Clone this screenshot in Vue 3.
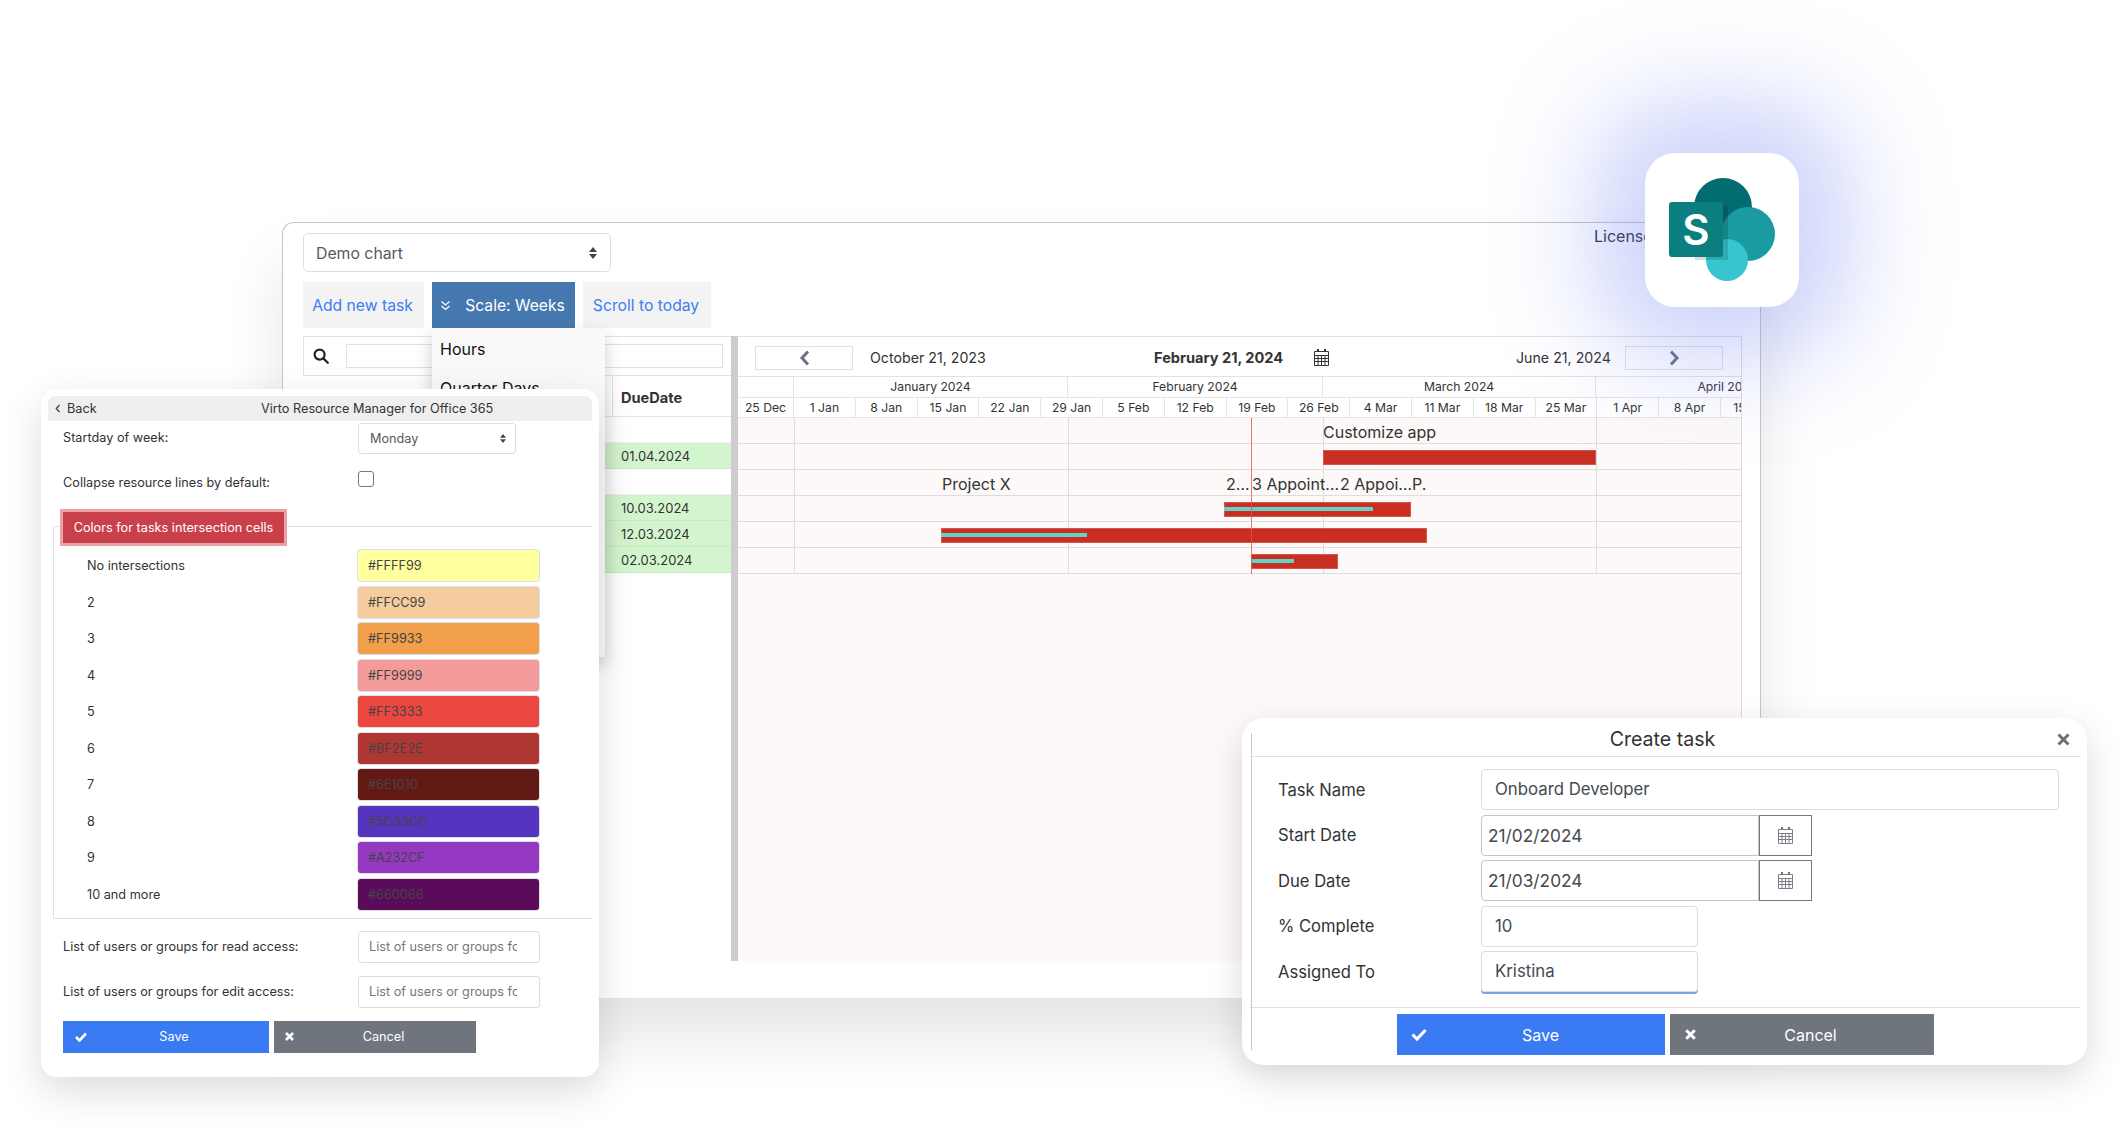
<script setup>
const months = [
  { label: '', w: 56 },
  { label: 'January 2024', w: 274 },
  { label: 'February 2024', w: 255 },
  { label: 'March 2024', w: 273 },
  { label: 'April 2024', w: 264 }
]
const weeks = ['1 Jan', '8 Jan', '15 Jan', '22 Jan', '29 Jan', '5 Feb', '12 Feb', '19 Feb', '26 Feb', '4 Mar', '11 Mar', '18 Mar', '25 Mar', '1 Apr', '8 Apr', '15 Apr']
const monthLines = [56, 330, 585, 858]
const rows = [
  { due: '', labels: [{ x: 585, t: 'Customize app' }] },
  { due: '01.04.2024', bar: { x: 585, w: 273 } },
  { due: '', labels: [{ x: 204, t: 'Project X' }, { x: 488, t: '2…' }, { x: 514, t: '3 Appoint…' }, { x: 602, t: '2 Appoi…' }, { x: 674, t: 'P.' }] },
  { due: '10.03.2024', bar: { x: 486, w: 187, p: 149 } },
  { due: '12.03.2024', bar: { x: 203, w: 486, p: 146 } },
  { due: '02.03.2024', bar: { x: 513, w: 87, p: 43 } }
]
const colors = [
  { label: 'No intersections', hex: '#FFFF99', bg: '#ffff9e' },
  { label: '2', hex: '#FFCC99', bg: '#f5cc9e' },
  { label: '3', hex: '#FF9933', bg: '#f19f4a' },
  { label: '4', hex: '#FF9999', bg: '#f39b9b' },
  { label: '5', hex: '#FF3333', bg: '#eb4640' },
  { label: '6', hex: '#BF2E2E', bg: '#ae3633' },
  { label: '7', hex: '#6E1010', bg: '#641a14' },
  { label: '8', hex: '#5C33CC', bg: '#5535c0' },
  { label: '9', hex: '#A232CF', bg: '#9538c2' },
  { label: '10 and more', hex: '#660066', bg: '#5a0c5a' }
]
const taskRows = [
  { label: 'Task Name', value: 'Onboard Developer', type: 'full' },
  { label: 'Start Date', value: '21/02/2024', type: 'date' },
  { label: 'Due Date', value: '21/03/2024', type: 'date' },
  { label: '% Complete', value: '10', type: 'short' },
  { label: 'Assigned To', value: 'Kristina', type: 'focus' }
]
</script>

<template>
  <div class="page">
    <!-- main gantt window -->
    <div class="window">
      <div class="license">License</div>
      <div class="select demo-select">
        <span>Demo chart</span>
        <svg class="updown" width="8" height="12" viewBox="0 0 8 12"><path d="M4 0l4 5H0zM4 12L0 7h8z" fill="#444" /></svg>
      </div>
      <div class="toolbar">
        <div class="tool-btn add-btn">Add new task</div>
        <div class="scale-wrap">
          <div class="tool-btn scale-btn">
            <svg width="11" height="11" viewBox="0 0 11 11" fill="none" stroke="#fff" stroke-width="1.3"><path d="M1.5 1.5l4 3.5 4-3.5M1.5 6l4 3.5 4-3.5" /></svg>
            <span>Scale: Weeks</span>
          </div>
          <div class="scale-menu">
            <div class="menu-item">Hours</div>
            <div class="menu-item">Quarter Days</div>
          </div>
        </div>
        <div class="tool-btn today-btn">Scroll to today</div>
      </div>

      <div class="chart">
        <div class="grid-side">
          <div class="search-row">
            <svg width="16" height="16" viewBox="0 0 16 16" fill="none" stroke="#222" stroke-width="2.2"><circle cx="6.6" cy="6.6" r="5" /><path d="M10.4 10.4l4.4 4.4" stroke-linecap="round" /></svg>
            <div class="search-input"></div>
          </div>
          <div class="grid-head">
            <div class="due-col due-title">DueDate</div>
          </div>
          <div v-for="(r, i) in rows" :key="i" class="grid-row" :class="{ green: r.due }">
            <div class="due-col">{{ r.due }}</div>
          </div>
        </div>
        <div class="splitter"></div>
        <div class="gantt">
          <div class="gantt-nav">
            <div class="nav-btn">
              <svg width="11" height="16" viewBox="0 0 11 16" fill="none" stroke="#6c7280" stroke-width="3"><path d="M9 1.5L3 8l6 6.5" /></svg>
            </div>
            <span class="nav-from">October 21, 2023</span>
            <span class="nav-now">February 21, 2024</span>
            <svg class="nav-cal" width="15" height="17" viewBox="0 0 15 17"><path d="M3 0h2v3H3zM10 0h2v3h-2z" fill="#333" /><path d="M.5 2.5h14v14H.5zM.5 6.5h14M.5 9.5h14M.5 12.5h14M4 6v10M7.5 6v10M11 6v10" fill="none" stroke="#333" stroke-width="1" /></svg>
            <span class="nav-to">June 21, 2024</span>
            <div class="nav-btn next">
              <svg width="11" height="16" viewBox="0 0 11 16" fill="none" stroke="#6c7280" stroke-width="3"><path d="M2 1.5L8 8l-6 6.5" /></svg>
            </div>
          </div>
          <div class="scale-row month-row">
            <div v-for="m in months" :key="m.w + m.label" class="month" :style="{ width: m.w + 'px' }">{{ m.label }}</div>
          </div>
          <div class="scale-row week-row">
            <div class="week first">25 Dec</div>
            <div v-for="w in weeks" :key="w" class="week">{{ w }}</div>
          </div>
          <div class="gantt-body">
            <div v-for="x in monthLines" :key="x" class="month-line" :style="{ left: x + 'px' }"></div>
            <div v-for="(r, i) in rows" :key="i" class="g-row">
              <span v-for="l in r.labels" :key="l.t" class="g-label" :style="{ left: l.x + 'px' }">{{ l.t }}</span>
              <div v-if="r.bar" class="bar" :style="{ left: r.bar.x + 'px', width: r.bar.w + 'px' }">
                <div v-if="r.bar.p" class="progress" :style="{ width: r.bar.p + 'px' }"></div>
              </div>
            </div>
            <div class="today-line"></div>
          </div>
        </div>
      </div>
    </div>

    <!-- sharepoint tile -->
    <div class="logo-tile">
      <svg width="154" height="154" viewBox="0 0 154 154">
        <circle cx="78" cy="54" r="29" fill="#036c70" />
        <circle cx="103" cy="81" r="27" fill="#1a9ba1" />
        <circle cx="82" cy="107" r="21" fill="#37c6d0" />
        <path d="M50 52h30a3 3 0 0 1 3 3v52H50z" fill="#000" opacity=".14" />
        <rect x="24" y="49" width="54" height="55" rx="3" fill="#0b7f7f" />
        <text x="51" y="92" text-anchor="middle" class="logo-s">S</text>
      </svg>
    </div>

    <!-- settings panel -->
    <div class="settings">
      <div class="settings-head">
        <span class="back">
          <svg width="6" height="9" viewBox="0 0 6 9" fill="none" stroke="#333" stroke-width="1.1"><path d="M4.5 1L1.2 4.5 4.5 8" /></svg>
          Back
        </span>
        <span class="settings-title">Virto Resource Manager for Office 365</span>
      </div>
      <div class="form-row week-start">
        <span class="row-label">Startday of week:</span>
        <div class="select week-select">
          <span>Monday</span>
          <svg width="6" height="9" viewBox="0 0 8 12"><path d="M4 0l4 5H0zM4 12L0 7h8z" fill="#444" /></svg>
        </div>
      </div>
      <div class="form-row collapse-row">
        <span class="row-label">Collapse resource lines by default:</span>
        <div class="checkbox"></div>
      </div>
      <div class="fieldset">
        <div class="legend">Colors for tasks intersection cells</div>
        <div class="color-list">
          <div v-for="c in colors" :key="c.hex" class="color-row">
            <span class="color-label">{{ c.label }}</span>
            <div class="swatch" :style="{ background: c.bg }">{{ c.hex }}</div>
          </div>
        </div>
      </div>
      <div class="form-row access-row read-row">
        <span class="row-label">List of users or groups for read access:</span>
        <div class="text-box"><span>List of users or groups fc</span></div>
      </div>
      <div class="form-row access-row">
        <span class="row-label">List of users or groups for edit access:</span>
        <div class="text-box"><span>List of users or groups fc</span></div>
      </div>
      <div class="settings-actions">
        <div class="btn save small-save">
          <svg width="12" height="10" viewBox="0 0 12 10" fill="none" stroke="#fff" stroke-width="2.6"><path d="M1 5l3.5 3.5L11 1.5" /></svg>
          <span>Save</span>
        </div>
        <div class="btn cancel small-cancel">
          <svg width="9" height="9" viewBox="0 0 9 9" fill="none" stroke="#fff" stroke-width="2.6"><path d="M1 1l7 7M8 1L1 8" /></svg>
          <span>Cancel</span>
        </div>
      </div>
    </div>

    <!-- create task dialog -->
    <div class="dialog">
      <div class="dialog-edge"></div>
      <div class="dialog-head">
        <span>Create task</span>
        <svg class="dialog-close" width="13" height="13" viewBox="0 0 13 13" fill="none" stroke="#6b7078" stroke-width="3"><path d="M1.5 1.5l10 10M11.5 1.5l-10 10" /></svg>
      </div>
      <div class="dialog-body">
        <div v-for="t in taskRows" :key="t.label" class="task-row">
          <span class="task-label">{{ t.label }}</span>
          <div v-if="t.type === 'date'" class="date-group">
            <div class="task-input date-input">{{ t.value }}</div>
            <div class="date-addon">
              <svg width="15" height="17" viewBox="0 0 15 17"><path d="M3 0h2v3H3zM10 0h2v3h-2z" fill="#6b7078" /><path d="M.5 2.5h14v14H.5zM.5 6.5h14M.5 9.5h14M.5 12.5h14M4 6v10M7.5 6v10M11 6v10" fill="none" stroke="#7b8088" stroke-width="1" /></svg>
            </div>
          </div>
          <div v-else class="task-input" :class="t.type">{{ t.value }}</div>
        </div>
      </div>
      <div class="dialog-foot">
        <div class="btn save big-save">
          <svg width="16" height="13" viewBox="0 0 12 10" fill="none" stroke="#fff" stroke-width="2.4"><path d="M1 5l3.5 3.5L11 1.5" /></svg>
          <span>Save</span>
        </div>
        <div class="btn cancel big-cancel">
          <svg width="11" height="11" viewBox="0 0 9 9" fill="none" stroke="#fff" stroke-width="2.4"><path d="M1 1l7 7M8 1L1 8" /></svg>
          <span>Cancel</span>
        </div>
      </div>
    </div>
  </div>
</template>

<style>
html, body { background: #fff; }
</style>

<style scoped>
.page {
  position: relative;
  width: 2127px;
  height: 1143px;
  overflow: hidden;
  background: #fff;
  font-family: Inter, "Liberation Sans", sans-serif;
  color: #333;
}

/* main window */
.window {
  position: absolute;
  z-index: 0;
  left: 282px;
  top: 222px;
  width: 1479px;
  height: 776px;
  box-sizing: border-box;
  padding: 10px 0 0 20px;
  background: #fff;
  border: 1px solid #c4c4c4;
  border-bottom: none;
  border-radius: 12px 0 0 0;
  box-shadow: 0 40px 60px rgba(0, 0, 0, .1);
}
.license {
  position: absolute;
  left: 1311px;
  top: 3px;
  font-size: 16px;
  line-height: 20px;
  color: #2c2c44;
}
.select {
  display: flex;
  align-items: center;
  justify-content: space-between;
  box-sizing: border-box;
  background: #fff;
  border: 1px solid #dcdee2;
  border-radius: 5px;
  color: #555a60;
}
.demo-select {
  width: 308px;
  height: 39px;
  padding: 1px 13px 0 12px;
  font-size: 15.8px;
}
.toolbar {
  display: flex;
  gap: 8px;
  margin-top: 10px;
}
.tool-btn {
  display: flex;
  align-items: center;
  justify-content: center;
  box-sizing: border-box;
  height: 46px;
  padding-right: 2px;
  background: #f3f3f3;
  color: #3b7df2;
  font-size: 15.7px;
}
.add-btn { width: 121px; }
.today-btn { width: 128px; }
.scale-wrap { position: relative; }
.scale-btn {
  width: 143px;
  gap: 14px;
  background: #4678b0;
  color: #fff;
}
.scale-menu {
  position: absolute;
  z-index: 1;
  left: 0;
  top: 46px;
  width: 173px;
  height: 329px;
  box-sizing: border-box;
  padding: 8px 8px 0;
  background: #f9f9f9;
  box-shadow: 0 8px 16px rgba(0, 0, 0, .2);
  overflow: hidden;
}
.menu-item {
  height: 39px;
  line-height: 26px;
  font-size: 16px;
  color: #111;
}

.chart {
  display: flex;
  height: 625px;
  margin-top: 8px;
  width: 1439px;
  border-right: 1px solid #ddd;
  box-sizing: border-box;
}
.grid-side {
  width: 428px;
  flex: none;
}
.search-row {
  display: flex;
  align-items: center;
  gap: 17px;
  height: 40px;
  box-sizing: border-box;
  padding: 0 8px 0 9px;
  border: 1px solid #e2e2e2;
  border-right: none;
}
.search-input {
  flex: 1;
  height: 24px;
  box-sizing: border-box;
  border: 1px solid #dfe1e6;
}
.grid-head {
  display: flex;
  justify-content: flex-end;
  height: 41px;
  box-sizing: border-box;
  border-bottom: 1px solid #e4e4e4;
}
.due-col {
  box-sizing: border-box;
  width: 119px;
  padding-left: 9px;
  font-size: 13px;
  line-height: 26px;
  color: #333;
}
.due-title {
  font-weight: 700;
  font-size: 14.6px;
  line-height: 44px;
  padding-left: 8px;
  border-left: 1px solid #e0e0e0;
}
.grid-row {
  display: flex;
  justify-content: flex-end;
  height: 26px;
  box-sizing: border-box;
  border-bottom: 1px solid #f0f0f0;
}
.grid-row.green {
  background: #d3f5cd;
  border-bottom-color: #c8eac2;
}
.splitter {
  width: 7px;
  flex: none;
  background: #cdcdcd;
}
.gantt {
  flex: 1;
  min-width: 0;
  overflow: hidden;
  background: #fdf9f8;
}
.gantt-nav {
  position: relative;
  display: flex;
  align-items: center;
  height: 41px;
  box-sizing: border-box;
  padding: 2px 0 0 17px;
  background: #fff;
  border-top: 1px solid #e2e2e2;
  border-bottom: 1px solid #e2e2e2;
  font-size: 14.2px;
}
.nav-btn {
  display: flex;
  align-items: center;
  justify-content: center;
  flex: none;
  box-sizing: border-box;
  width: 98px;
  height: 24px;
  border: 1px solid #dfe1e6;
  background: #fff;
}
.nav-from { margin-left: 17px; width: 284px; flex: none; }
.nav-now { font-weight: 700; font-size: 14.6px; width: 160px; flex: none; }
.nav-cal { flex: none; }
.nav-to { margin-left: 187px; width: 109px; flex: none; }
.scale-row {
  display: flex;
  background: #fff;
  white-space: nowrap;
  font-size: 12.2px;
  color: #333;
}
.month-row {
  height: 20px;
  line-height: 20px;
}
.month {
  flex: none;
  box-sizing: border-box;
  text-align: center;
  border-right: 1px solid #e4e4e4;
}
.week-row {
  height: 21px;
  line-height: 19px;
  border-top: 1px solid #e4e4e4;
  border-bottom: 1px solid #e4e4e4;
  box-sizing: border-box;
}
.week {
  flex: none;
  box-sizing: border-box;
  width: 61.8px;
  text-align: center;
  border-right: 1px solid #e4e4e4;
}
.week.first { width: 56px; }
.gantt-body {
  position: relative;
  height: 544px;
}
.g-row {
  position: relative;
  height: 26px;
  box-sizing: border-box;
  border-bottom: 1px solid #dedcdc;
}
.g-label {
  position: absolute;
  top: 2px;
  font-size: 16px;
  line-height: 25px;
  white-space: nowrap;
  color: #333;
}
.bar {
  position: absolute;
  top: 6px;
  height: 15px;
  background: #c92e22;
  box-shadow: inset 0 0 0 1px rgba(255, 255, 255, .2);
}
.progress {
  height: 4px;
  margin-top: 5px;
  background: #62d3c6;
}
.month-line {
  position: absolute;
  top: 0;
  width: 1px;
  height: 155px;
  background: #dedcdc;
}
.today-line {
  position: absolute;
  left: 513px;
  top: 0;
  width: 1px;
  height: 156px;
  background: rgba(240, 80, 80, .8);
}

/* logo */
.logo-tile {
  position: absolute;
  left: 1645px;
  top: 153px;
  width: 154px;
  height: 154px;
  background: #fff;
  border-radius: 30px;
  box-shadow: 0 0 100px 50px rgba(110, 130, 240, .36);
}
.logo-s {
  fill: #fff;
  font-family: Inter, sans-serif;
  font-size: 42px;
  font-weight: 600;
}

/* settings */
.settings {
  position: absolute;
  left: 41px;
  top: 389px;
  width: 558px;
  height: 688px;
  box-sizing: border-box;
  padding: 7px 7px 0;
  background: #fff;
  border-radius: 16px;
  box-shadow: 0 14px 40px rgba(0, 0, 0, .14);
  font-size: 12.7px;
}
.settings-head {
  position: relative;
  display: flex;
  align-items: center;
  height: 25px;
  background: #efefef;
  border-radius: 8px 8px 0 0;
  padding-left: 7px;
}
.back { display: flex; align-items: center; gap: 6px; }
.settings-title {
  position: absolute;
  left: 213px;
  white-space: nowrap;
}
.form-row {
  display: flex;
  align-items: center;
  padding-left: 15px;
}
.row-label {
  width: 295px;
  flex: none;
}
.week-start {
  height: 31px;
  margin-top: 2px;
  align-items: flex-start;
  line-height: 30px;
}
.week-select {
  width: 158px;
  height: 31px;
  padding: 0 9px 0 11px;
  border-radius: 3px;
}
.collapse-row {
  height: 16px;
  margin-top: 17px;
  align-items: flex-start;
  line-height: 24px;
}
.checkbox {
  width: 16px;
  height: 16px;
  box-sizing: border-box;
  border: 1px solid #777;
  border-radius: 3px;
}
.fieldset {
  margin: 39px 0 0 5px;
  padding: 0 0 8px;
  border: 1px solid #dfe2e8;
  border-right: none;
}
.legend {
  display: flex;
  align-items: center;
  justify-content: center;
  box-sizing: border-box;
  width: 227px;
  height: 37px;
  margin: -18px 0 0 6px;
  background: #c9404a;
  border: 3px solid #e8a3a8;
  color: #fff;
}
.color-list {
  display: flex;
  flex-direction: column;
  gap: 5.5px;
  margin-top: 4px;
  padding-left: 33px;
}
.color-row {
  display: flex;
  align-items: center;
}
.color-label {
  width: 271px;
  flex: none;
}
.swatch {
  box-sizing: border-box;
  width: 181px;
  height: 31px;
  line-height: 31px;
  padding-left: 10px;
  border-radius: 3px;
  color: #444;
  box-shadow: 0 0 0 1px rgba(210, 210, 225, .7);
}
.access-row { height: 32px; margin-top: 13px; }
.read-row { margin-top: 12px; }
.text-box {
  width: 182px;
  height: 32px;
  box-sizing: border-box;
  padding: 0 22px 0 10px;
  line-height: 30px;
  border: 1px solid #dcdee2;
  border-radius: 3px;
  color: #777;
  white-space: nowrap;
  overflow: hidden;
}
.text-box span { display: block; overflow: hidden; }
.settings-actions {
  display: flex;
  gap: 5px;
  margin: 13px 0 0 15px;
}

.btn {
  display: flex;
  align-items: center;
  box-sizing: border-box;
  color: #fff;
}
.btn span { flex: 1; text-align: center; }
.save { background: #3a7bf4; }
.cancel { background: #6f757d; }
.small-save { width: 206px; height: 32px; padding: 0 8px 0 12px; }
.small-cancel { width: 202px; height: 32px; padding: 0 3px 0 11px; }
.big-save { width: 268px; height: 41px; padding: 0 10px 0 14px; font-size: 16px; }
.big-cancel { width: 264px; height: 41px; padding: 0 8px 0 15px; font-size: 16px; }

/* create task */
.dialog {
  position: absolute;
  left: 1242px;
  top: 718px;
  width: 845px;
  height: 347px;
  box-sizing: border-box;
  background: #fff;
  border-radius: 22px;
  box-shadow: 0 12px 36px rgba(0, 0, 0, .15);
}
.dialog-edge {
  position: absolute;
  left: 9px;
  top: 15px;
  bottom: 15px;
  width: 1px;
  background: #c8c8c8;
}
.dialog-head {
  position: relative;
  display: flex;
  align-items: center;
  justify-content: center;
  box-sizing: border-box;
  height: 39px;
  margin: 0 6px 0 8px;
  padding: 4px 6px 0 0;
  font-size: 19.6px;
  border-bottom: 1px solid #e2e2e2;
}
.dialog-close {
  position: absolute;
  right: 11px;
  top: 15px;
}
.dialog-body {
  display: flex;
  flex-direction: column;
  gap: 4.5px;
  padding: 12px 0 0 36px;
}
.task-row {
  display: flex;
  align-items: center;
  height: 41px;
}
.task-label {
  width: 203px;
  flex: none;
  font-size: 16.6px;
}
.task-input {
  box-sizing: border-box;
  height: 41px;
  line-height: 39px;
  padding-left: 13px;
  border: 1px solid #d9dbdf;
  border-radius: 4px;
  font-size: 16.8px;
  color: #444a50;
}
.task-input.full { width: 578px; }
.task-input.short { width: 217px; }
.task-input.focus {
  width: 217px;
  box-shadow: 0 2px 0 #7fa2dc;
}
.date-group { display: flex; }
.date-input {
  width: 278px;
  padding-left: 6px;
  border-color: #c4c4c4;
  border-radius: 4px 0 0 4px;
  font-size: 17.3px;
}
.date-addon {
  display: flex;
  align-items: center;
  justify-content: center;
  box-sizing: border-box;
  width: 53px;
  height: 41px;
  border: 1px solid #777;
}
.dialog-foot {
  display: flex;
  justify-content: center;
  gap: 5px;
  margin: 15px 7px 0 8px;
  padding-top: 6px;
  border-top: 1px solid #e2e2e2;
}
</style>
